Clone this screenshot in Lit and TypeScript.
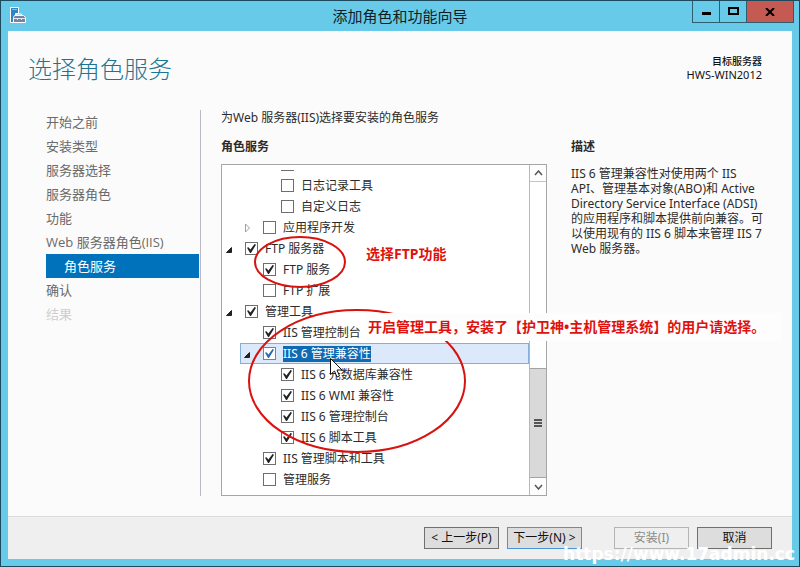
import { LitElement, html, svg, css, nothing } from "lit";
import { customElement, property } from "lit/decorators.js";
import { classMap } from "lit/directives/class-map.js";

interface RoleNode {
  label: string;
  level: number;
  checked?: boolean;
  expander?: "open" | "closed";
  selected?: boolean;
}

const STEPS = [
  { label: "开始之前" },
  { label: "安装类型" },
  { label: "服务器选择" },
  { label: "服务器角色" },
  { label: "功能" },
  { label: "Web 服务器角色(IIS)" },
  { label: "角色服务", current: true },
  { label: "确认" },
  { label: "结果", disabled: true },
];

const ROLES: RoleNode[] = [
  { label: "", level: 3 },
  { label: "日志记录工具", level: 3 },
  { label: "自定义日志", level: 3 },
  { label: "应用程序开发", level: 2, expander: "closed" },
  { label: "FTP 服务器", level: 1, checked: true, expander: "open" },
  { label: "FTP 服务", level: 2, checked: true },
  { label: "FTP 扩展", level: 2 },
  { label: "管理工具", level: 1, checked: true, expander: "open" },
  { label: "IIS 管理控制台", level: 2, checked: true },
  { label: "IIS 6 管理兼容性", level: 2, checked: true, expander: "open", selected: true },
  { label: "IIS 6 元数据库兼容性", level: 3, checked: true },
  { label: "IIS 6 WMI 兼容性", level: 3, checked: true },
  { label: "IIS 6 管理控制台", level: 3, checked: true },
  { label: "IIS 6 脚本工具", level: 3, checked: true },
  { label: "IIS 管理脚本和工具", level: 2, checked: true },
  { label: "管理服务", level: 2 },
];

@customElement("title-bar")
export class TitleBar extends LitElement {
  static styles = css`
    :host {
      display: grid;
      grid-template-columns: 1fr auto 1fr;
      flex: none;
      height: 30px;
      color: #101c22;
    }
    .logo {
      margin: 6px 0 0 9px;
    }
    h1 {
      margin: 0;
      font-size: 15px;
      font-weight: 400;
      line-height: 30px;
    }
    .controls {
      display: flex;
      justify-self: end;
      height: 22px;
      box-sizing: border-box;
      margin-right: 5px;
      border: 1px solid #2f5d70;
      border-top: 0;
    }
    button {
      display: grid;
      place-items: center;
      width: 27px;
      padding: 0;
      border: 0;
      border-right: 1px solid #2f5d70;
      background: #67cae9;
    }
    button.close {
      width: 46px;
      border-right: 0;
      background: #c45a51;
    }
  `;
  render() {
    return html`
      <svg class="logo" width="18" height="18" viewBox="0 0 18 18">
        <path d="M.5 .5h8v6h-3v9h-5z" fill="#2f86c6" stroke="#fff" />
        <path d="M2 2.500h5" stroke="#7fc0e8" />
        <path d="M6.500 8.500v-1.500h5v1.500" fill="none" stroke="#fff" />
        <path d="M4.500 8.500h9l2 2v5h-12v-5z" fill="#7383a3" stroke="#fff" />
        <path d="M4 11.500h11M7.500 11v2M11.500 11v2" stroke="#dfe5ef" />
      </svg>
      <h1>添加角色和功能向导</h1>
      <div class="controls">
        <button aria-label="最小化">
          <svg width="11" height="9"><path d="M1 5h9v3H1z" /></svg>
        </button>
        <button aria-label="最大化">
          <svg width="11" height="9">
            <path d="M1 1h9v6H1z" fill="none" stroke="#000" stroke-width="2" />
          </svg>
        </button>
        <button class="close" aria-label="关闭">
          <svg width="10" height="8">
            <path d="M1 0l8 8M9 0L1 8" fill="none" stroke="#000" stroke-width="2" />
          </svg>
        </button>
      </div>
    `;
  }
}

@customElement("wizard-steps")
export class WizardSteps extends LitElement {
  static styles = css`
    :host {
      display: block;
    }
    ul {
      margin: 0;
      padding: 0;
      list-style: none;
    }
    a {
      display: block;
      line-height: 24px;
      color: #6a6a6a;
      font-size: 13px;
      font-family: "Open Sans", "Noto Sans CJK SC", sans-serif;
      text-decoration: none;
      white-space: nowrap;
    }
    .current {
      padding-left: 18px;
      background: #0072bc;
      color: #fff;
    }
    .disabled {
      color: #cfcfcf;
    }
  `;
  render() {
    return html`<nav>
      <ul>
        ${STEPS.map(
          (s) => html`<li>
            <a
              href="#"
              class=${classMap({ current: !!s.current, disabled: !!s.disabled })}
              >${s.label}</a
            >
          </li>`
        )}
      </ul>
    </nav>`;
  }
}

@customElement("role-row")
export class RoleRow extends LitElement {
  @property({ attribute: false }) node!: RoleNode;

  static styles = css`
    :host {
      display: block;
      flex: none;
    }
    .row {
      display: flex;
      align-items: center;
      gap: 8px;
      height: 21px;
      box-sizing: border-box;
      border: 1px solid transparent;
    }
    .level2 {
      margin-left: 18px;
    }
    .level3 {
      margin-left: 36px;
    }
    .selected {
      border-color: #86aedb;
      background: #dce9fb;
    }
    .expander {
      width: 14px;
      height: 10px;
      flex: none;
    }
    label {
      display: flex;
      align-items: center;
      gap: 7px;
      white-space: nowrap;
    }
    input {
      appearance: none;
      display: grid;
      place-items: center;
      width: 13px;
      height: 13px;
      flex: none;
      margin: 0;
      border: 1px solid #6e6e6e;
      background: #fff;
    }
    input:checked::before {
      content: "";
      width: 9px;
      height: 9px;
      background: #222;
      clip-path: polygon(0 42%, 16% 36%, 38% 62%, 84% 0, 100% 8%, 44% 100%, 34% 100%);
    }
    .selected input {
      border-color: #4a90d0;
    }
    .selected input:checked::before {
      background: #2a6cac;
    }
    .selected span {
      background: #0f6ab4;
      color: #fff;
    }
    span {
      line-height: 16px;
    }
  `;
  render() {
    const n = this.node;
    return html`<div class="row level${n.level} ${n.selected ? "selected" : ""}">
      <svg class="expander" viewBox="0 0 14 10">
        ${n.expander === "open"
          ? svg`<path d="M8.500 3.500v5h-5z" fill="#222" stroke="#222" />`
          : n.expander === "closed"
            ? svg`<path d="M4.500 1v8l4-4z" fill="#fff" stroke="#a0a0a0" />`
            : nothing}
      </svg>
      <label
        ><input type="checkbox" .checked=${!!n.checked} /><span>${n.label}</span></label
      >
    </div>`;
  }
}

@customElement("role-list")
export class RoleList extends LitElement {
  static styles = css`
    :host {
      display: flex;
      border: 1px solid #a6a6a6;
      background: #fff;
    }
    .viewport {
      display: flex;
      flex: 1;
      flex-direction: column;
      justify-content: flex-end;
      min-width: 0;
      margin: 5px 0;
      overflow: hidden;
    }
    .rail {
      display: flex;
      flex-direction: column;
      width: 17px;
      box-sizing: border-box;
      border-left: 1px solid #b8b8b8;
    }
    .arrow {
      display: grid;
      place-items: center;
      height: 17px;
      padding: 0;
      border: 0;
      background: #fdfdfd;
    }
    .up {
      border-bottom: 1px solid #c4c4c4;
    }
    .track {
      display: flex;
      flex: 1;
      align-items: flex-end;
    }
    .thumb {
      display: grid;
      place-items: center;
      width: 100%;
      height: 37%;
      box-sizing: border-box;
      border: 1px solid #a3a3a3;
      border-width: 1px 0;
      background: #d9d9d9;
    }
  `;
  render() {
    return html`
      <div class="viewport">${ROLES.map((n) => html`<role-row .node=${n}></role-row>`)}</div>
      <div class="rail">
        <button class="arrow up" aria-label="向上滚动">
          <svg width="9" height="6"><path d="M1 5l3.500-4L8 5" fill="none" stroke="#555" stroke-width="1.500" /></svg>
        </button>
        <div class="track">
          <div class="thumb">
            <svg width="8" height="8"><path d="M0 1h8M0 4h8M0 7h8" stroke="#555" stroke-width="2" /></svg>
          </div>
        </div>
        <button class="arrow" aria-label="向下滚动">
          <svg width="9" height="6"><path d="M1 1l3.500 4L8 1" fill="none" stroke="#555" stroke-width="1.500" /></svg>
        </button>
      </div>
    `;
  }
}

@customElement("app-root")
export class AppRoot extends LitElement {
  static styles = css`
    :host {
      display: flex;
      flex-direction: column;
      position: relative;
      height: 100vh;
      box-sizing: border-box;
      border: 1px solid #1d4a5c;
      background: #67cae9;
      color: #2b2b2b;
      font: 12px/16px "Noto Sans", "Noto Sans CJK SC", sans-serif;
    }
    .window {
      display: flex;
      flex: 1;
      flex-direction: column;
      min-height: 0;
      margin: 0 7px 7px;
      background: #fbfbfb;
    }
    header {
      display: flex;
      flex: none;
      justify-content: space-between;
      align-items: flex-start;
      padding: 20px 30px 0 20px;
      height: 79px;
      box-sizing: border-box;
    }
    h2 {
      margin: 0;
      color: #1d7593;
      font-size: 24px;
      font-weight: 300;
      line-height: 36px;
    }
    .server {
      padding-top: 4px;
      text-align: right;
      font-size: 11px;
      line-height: 13px;
      color: #111;
    }
    .caption {
      font-size: 10px;
      font-weight: 500;
    }
    main {
      display: grid;
      grid-template-columns: 163px 326px 1fr;
      grid-template-rows: minmax(0, 1fr);
      flex: 1;
      min-height: 0;
      padding: 0 26px 20px 38px;
    }
    .side {
      width: 154px;
      padding-right: 1px;
      box-sizing: border-box;
      border-right: 1px solid #b9b9c0;
      margin-right: auto;
    }
    .side {
      width: 155px;
    }
    .roles {
      display: flex;
      flex-direction: column;
      min-height: 0;
      padding-left: 12px;
    }
    .roles {
      width: 326px;
    }
    p,
    h3 {
      margin: 0;
    }
    h3 {
      font-size: 12px;
      line-height: 16px;
    }
    .roles h3 {
      margin: 13px 0 9px;
    }
    role-list {
      flex: 1;
      min-height: 0;
    }
    .about {
      padding: 29px 0 0 36px;
    }
    .about p {
      margin-top: 11px;
      line-height: 15px;
    }
    footer {
      display: flex;
      flex: none;
      align-items: flex-start;
      justify-content: flex-end;
      gap: 8px;
      height: 43px;
      box-sizing: border-box;
      padding: 10px 20px 0 0;
      border-top: 1px solid #dadada;
      background: #efefef;
    }
    footer button {
      width: 75px;
      height: 22px;
      padding: 0;
      border: 1px solid #707070;
      background: #dddddd;
      color: #111;
      font: inherit;
      line-height: 20px;
    }
    footer .next {
      border-color: #4a94dc;
    }
    footer .install {
      margin-left: 24px;
      border-color: #b4b4b4;
      background: #efefef;
      color: #8b8b8b;
    }
    .marks {
      position: absolute;
      left: -1px;
      top: -1px;
      pointer-events: none;
    }
    .note {
      position: absolute;
      color: #e0110d;
      font-weight: 700;
      font-size: 14px;
      line-height: 20px;
      white-space: nowrap;
    }
    .note-ftp {
      left: 365px;
      top: 243px;
    }
    .note-tools {
      left: 365px;
      top: 312px;
      padding: 4px 16px 4px 2px;
      background: #fdfdfd;
    }
    .watermark {
      position: absolute;
      right: 4px;
      bottom: 2px;
      color: #fff;
      font: 700 17px/20px "DejaVu Sans", sans-serif;
    }
  `;
  render() {
    return html`
      <title-bar></title-bar>
      <div class="window">
        <header>
          <h2>选择角色服务</h2>
          <div class="server"><div class="caption">目标服务器</div>HWS-WIN2012</div>
        </header>
        <main>
          <div class="side"><wizard-steps></wizard-steps></div>
          <section class="roles">
            <p>为Web 服务器(IIS)选择要安装的角色服务</p>
            <h3>角色服务</h3>
            <role-list></role-list>
          </section>
          <section class="about">
            <h3>描述</h3>
            <p>
              IIS 6 管理兼容性对使用两个 IIS API、管理基本对象(ABO)和 Active Directory Service
              Interface (ADSI) 的应用程序和脚本提供前向兼容。可以使用现有的 IIS 6 脚本来管理 IIS 7
              Web 服务器。
            </p>
          </section>
        </main>
        <footer>
          <button>&lt; 上一步(P)</button>
          <button class="next">下一步(N) &gt;</button>
          <button class="install" disabled>安装(I)</button>
          <button>取消</button>
        </footer>
      </div>
      <svg class="marks" width="480" height="460" viewBox="0 0 480 460">
        <g fill="none" stroke="#d8120f" stroke-width="2">
          <ellipse cx="300" cy="262" rx="45" ry="25" />
          <ellipse cx="357" cy="381" rx="108" ry="71" />
        </g>
        <path
          d="M330.500 358.500v16l4-3.500 2.500 6 2.500-1-2.500-6h5z"
          fill="#fff"
          stroke="#111"
        />
      </svg>
      <div class="note note-ftp">选择FTP功能</div>
      <div class="note note-tools">开启管理工具，安装了【护卫神•主机管理系统】的用户请选择。</div>
      <div class="watermark">https://www.17admin.cc</div>
    `;
  }
}
